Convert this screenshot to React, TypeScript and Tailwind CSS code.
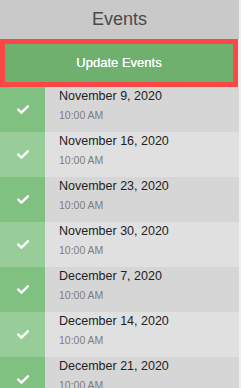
import React from "react";

const events = [
  "November 9, 2020",
  "November 16, 2020",
  "November 23, 2020",
  "November 30, 2020",
  "December 7, 2020",
  "December 14, 2020",
  "December 21, 2020",
];

function Check() {
  return (
    <svg width="12" height="9" viewBox="0 0 12 9" fill="none">
      <path d="M1.2 4.6 L4.4 7.6 L10.8 1.4" stroke="#ffffff" strokeWidth="2.4" strokeLinecap="square" />
    </svg>
  );
}

export default function App() {
  return (
    <div className="w-[241px] h-[388px] overflow-hidden bg-[#efefef] font-['Liberation_Sans',Arial,sans-serif]">
      <div className="w-[239px]">
        <div className="h-[39px] bg-[#c9c9c9] flex items-center justify-center text-[18px] text-[#4a4a4a]">
          Events
        </div>
        <div className="w-[238px] h-[48px] border-[5px] border-[#fd4646] bg-[#6fb06f] flex items-center justify-center text-white text-[13px] font-medium [text-shadow:0_0_0.4px_#fff]">
          Update Events
        </div>
        {events.map((d, i) => (
          <div key={d} className="flex h-[45px]">
            <div className={`w-[45px] flex items-center justify-center ${i % 2 === 0 ? "bg-[#80c080]" : "bg-[#98cc98]"}`}>
              <Check />
            </div>
            <div className={`flex-1 pl-[14px] pt-[2px] ${i % 2 === 0 ? "bg-[#d6d6d6]" : "bg-[#e0e0e0]"}`}>
              <div className="text-[12.5px] leading-[15px] text-[#222]">{d}</div>
              <div className="mt-[5px] text-[10.5px] leading-[12px] text-[#7d7d7d]">10:00 AM</div>
            </div>
          </div>
        ))}
      </div>
    </div>
  );
}
